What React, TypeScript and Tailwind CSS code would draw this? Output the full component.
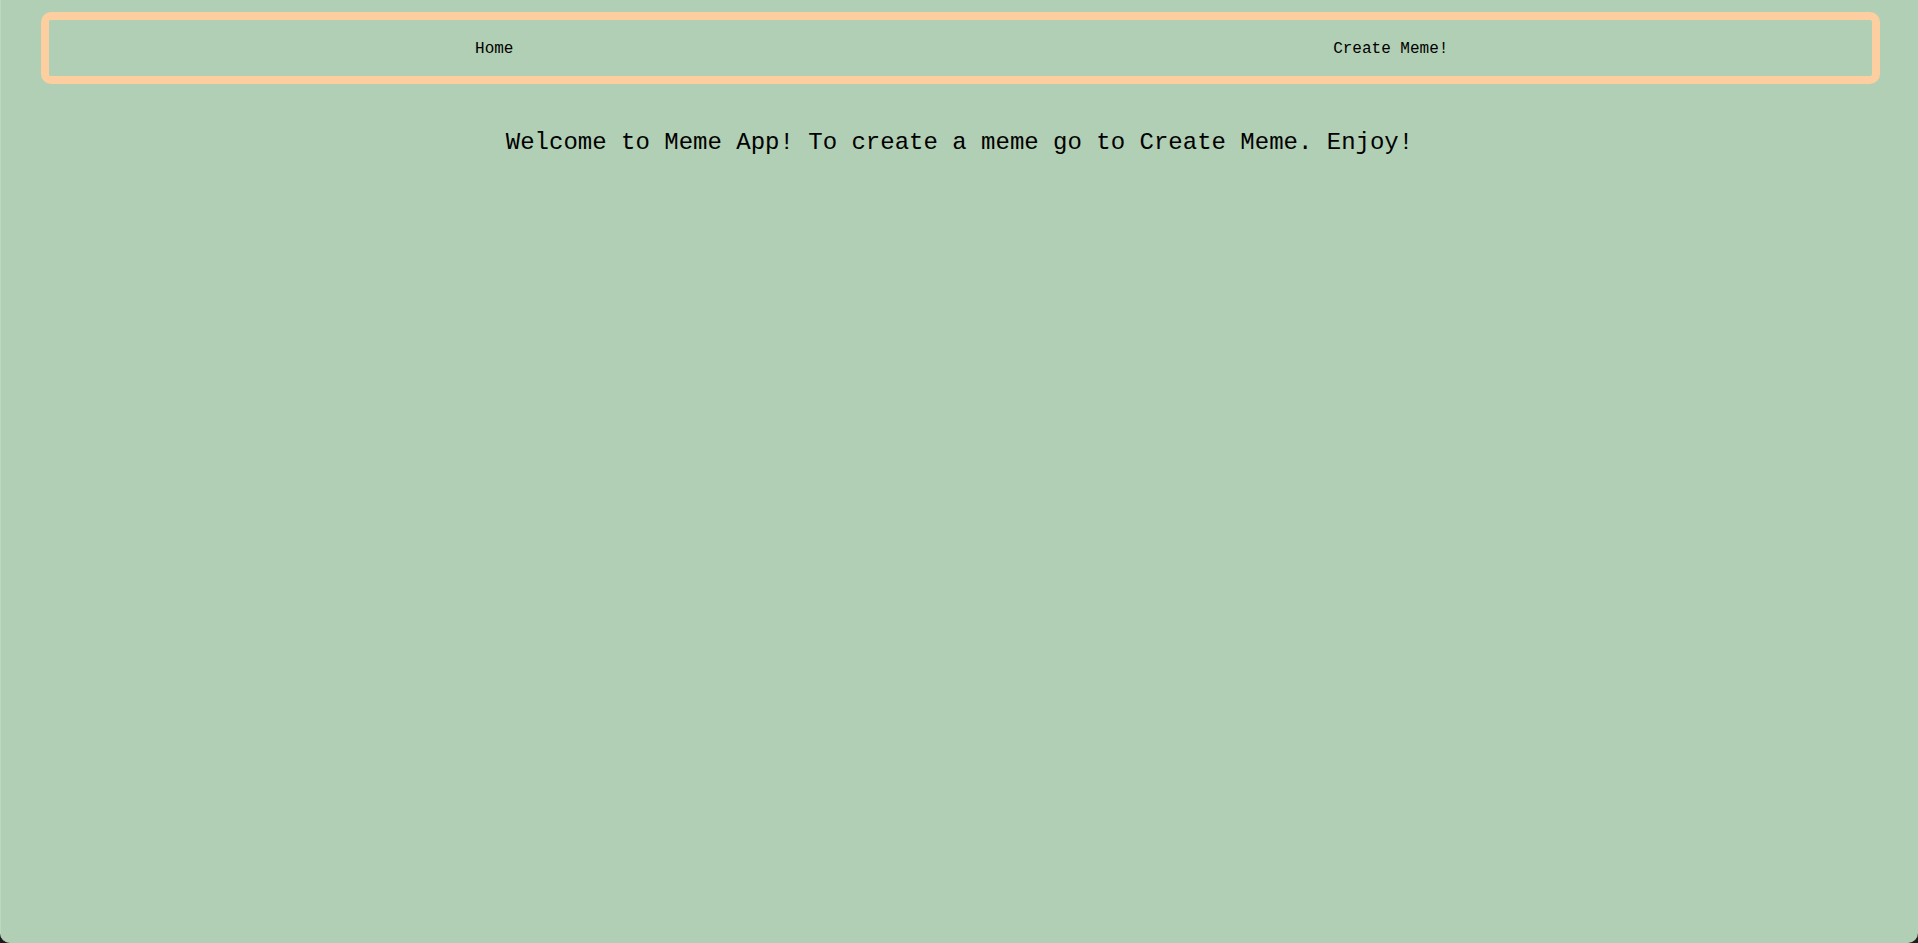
import React from "react";

const NavBar = () => {
  return (
    <nav className="ml-[40px] mr-[38px] h-[72px] border-8 border-[#fdcfa0] rounded-[10px] flex items-center pt-[2px] pr-[36px]">
      <a href="#" className="flex-1 text-center text-[16px] text-black pr-[6px]">
        Home
      </a>
      <a href="#" className="flex-1 text-center text-[16px] text-black">
        Create Meme!
      </a>
    </nav>
  );
};

const App = () => {
  return (
    <div className="w-full h-[943px] bg-[#1c1c1c]">
      <div
        className="h-full bg-[#b0cfb4] rounded-b-[10px] pt-[12px] border-l border-[#bcd8c0]"
        style={{ fontFamily: '"Liberation Mono", "Courier New", monospace' }}
      >
        <NavBar />
        <h1 className="mt-[41px] text-center text-[24px] leading-[36px] text-black">
          Welcome to Meme App! To create a meme go to Create Meme. Enjoy!
        </h1>
      </div>
    </div>
  );
};

export default App;
